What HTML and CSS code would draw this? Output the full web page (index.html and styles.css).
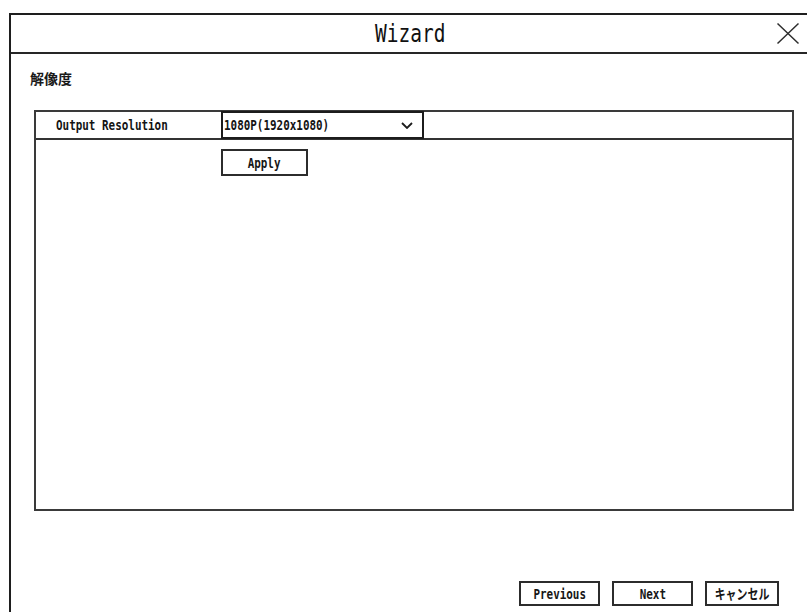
FILE: index.html
```html
<!DOCTYPE html>
<html lang="ja">
<head>
<meta charset="utf-8">
<title>Wizard</title>
<link rel="stylesheet" href="styles.css">
</head>
<body>
<div class="dialog">
  <div class="dialog-head">
    <span></span>
    <span class="title"><span class="narrow">Wizard</span></span>
    <button class="close" type="button" aria-label="Close">
      <svg width="24" height="23" viewBox="0 0 24 23" aria-hidden="true">
        <path d="M1.5 1.5 L22.5 21.5 M22.5 1.5 L1.5 21.5" stroke="#2e2e2e" stroke-width="1.5" fill="none"/>
      </svg>
    </button>
  </div>

  <div class="dialog-body">
    <h2 class="section-title">解像度</h2>

    <div class="panel">
      <div class="field-row">
        <div class="field-label"><span class="narrow">Output Resolution</span></div>
        <div class="select">
          <span class="narrow">1080P(1920x1080)</span>
          <svg class="chevron" width="12" height="7" viewBox="0 0 12 7" aria-hidden="true">
            <path d="M1 1 L6 6 L11 1" stroke="#1c1c1c" stroke-width="1.8" fill="none"/>
          </svg>
        </div>
      </div>
      <div class="apply-row">
        <button class="btn btn-apply" type="button"><span class="narrow mid">Apply</span></button>
      </div>
    </div>

    <div class="footer">
      <button class="btn btn-wide" type="button"><span class="narrow mid">Previous</span></button>
      <button class="btn btn-wide" type="button"><span class="narrow mid">Next</span></button>
      <button class="btn btn-cancel" type="button"><span class="narrow mid">キャンセル</span></button>
    </div>
  </div>
</div>
</body>
</html>
```

FILE: styles.css
```css
html, body {
  margin: 0;
  padding: 0;
  background: #ffffff;
  overflow: hidden;
}

body {
  font-family: "DejaVu Sans Mono", "Noto Sans CJK JP", monospace;
  color: #141414;
}

/* tall, narrow lettering used across the dialog */
.narrow {
  display: inline-block;
  white-space: nowrap;
  transform: scaleX(0.78);
  transform-origin: left center;
}

.narrow.mid {
  transform-origin: center center;
}

.dialog {
  box-sizing: border-box;
  margin: 13px 0 0 9px;
  width: 800px;
  height: 599px;
  border-left: 2px solid #1e1e1e;
  border-top: 2px solid #1e1e1e;
}

/* title bar */
.dialog-head {
  height: 37px;
  border-bottom: 2px solid #262626;
  display: grid;
  grid-template-columns: 1fr auto 1fr;
  align-items: center;
}

.title {
  font-size: 25px;
  line-height: 30px;
  text-align: center;
  padding-top: 1px;
  color: #111111;
}

.title .narrow {
  transform-origin: center center;
}

.close {
  justify-self: end;
  margin-right: 9px;
  padding: 0;
  border: 0;
  background: none;
  width: 24px;
  height: 23px;
  display: block;
}

.close svg {
  display: block;
}

/* content */
.dialog-body {
  padding: 16px 0 0 19px;
}

.section-title {
  margin: 0;
  font-family: "Noto Sans CJK JP", sans-serif;
  font-size: 14px;
  line-height: 16px;
  font-weight: 700;
  color: #1a1a1a;
}

.panel {
  box-sizing: border-box;
  margin: 24px 0 0 4px;
  width: 760px;
  height: 401px;
  border: 2px solid #3a3a3a;
}

.field-row {
  display: flex;
  height: 26px;
  border-bottom: 2px solid #333333;
  font-size: 14px;
  line-height: 26px;
  font-weight: 700;
}

.field-label {
  width: 185px;
  padding-left: 20px;
  box-sizing: border-box;
}

.select {
  box-sizing: border-box;
  width: 203px;
  height: 28px;
  margin: -1px 0;
  border: 2px solid #1c1c1c;
  padding: 0 9px 0 1px;
  display: flex;
  align-items: center;
  justify-content: space-between;
  line-height: 24px;
  background: #ffffff;
}

.chevron {
  display: block;
  flex: none;
}

.apply-row {
  padding: 9px 0 0 185px;
}

/* buttons */
.btn {
  box-sizing: border-box;
  height: 26px;
  border: 2px solid #2c2c2c;
  background: #ffffff;
  padding: 0;
  margin: 0;
  font-family: "DejaVu Sans Mono", "Noto Sans CJK JP", monospace;
  font-size: 14px;
  line-height: 22px;
  font-weight: 700;
  color: #161616;
  display: flex;
  align-items: center;
  justify-content: center;
}

.btn-apply {
  width: 87px;
  height: 27px;
}

.footer {
  display: flex;
  justify-content: flex-end;
  gap: 12px;
  margin-top: 70px;
  padding-right: 30px;
}

.btn-wide {
  width: 81px;
  height: 25px;
}

.btn-cancel {
  width: 74px;
  height: 25px;
}
```
